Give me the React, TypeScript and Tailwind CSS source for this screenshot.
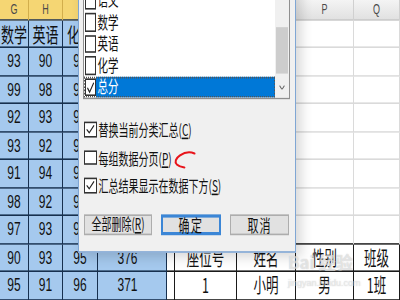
import type { ReactNode } from 'react'

const CJK = "font-['Noto_Sans_CJK_SC','Noto_Sans',sans-serif]"
const NUM = "font-['Liberation_Sans',Arial,sans-serif]"

// column widths of the visible sheet part
const COL_W = ['w-[29px]', 'w-[34px]', 'w-[35px]', 'w-[69px]', 'w-[8px]', 'w-[62px]', 'w-[59px]', 'w-[58px]', 'w-[46px]']
const HEAD = ['G', 'H', 'I', 'J', 'M', 'N', 'O', 'P', 'Q']

const SCORES = [
  [93, 90, 95, 375],
  [99, 98, 94, 383],
  [92, 93, 96, 372],
  [93, 92, 93, 374],
  [91, 94, 95, 371],
  [98, 92, 97, 380],
  [97, 93, 96, 379],
  [90, 93, 95, 376],
  [95, 91, 96, 371],
]

const RIGHT_TABLE: Record<number, string[]> = {
  7: ['', '座位号', '姓名', '性别', '班级'],
  8: ['', '1', '小明', '男', '1班'],
}

function Cell({ col, className, children }: { col: number; className: string; children?: ReactNode }) {
  return (
    <div className={`${COL_W[col]} shrink-0 h-full flex items-center justify-center leading-none ${className}`}>
      {children}
    </div>
  )
}

function Check({ checked, className }: { checked: boolean; className: string }) {
  return (
    <span className={`shrink-0 border border-[#333] bg-white flex ${className}`}>
      {checked && (
        <svg viewBox="0 0 10 10" preserveAspectRatio="none" className="w-full h-full">
          <path d="M1.6 5.2 L4 8 L8.6 1.8" fill="none" stroke="#222" strokeWidth="1.1" />
        </svg>
      )}
    </span>
  )
}

function Key({ text, k }: { text: string; k: string }) {
  return (
    <span>
      {text}(<span className="underline">{k}</span>)
    </span>
  )
}

function Sheet() {
  return (
    <div className="flex flex-col">
      {/* column headers */}
      <div className="flex h-[13px]">
        {HEAD.map((h, i) =>
          i < 4 ? (
            <Cell key={h} col={i} className={`bg-[#f5d673] border-r border-r-[#d2ae4c] border-b border-b-[#2c3e55] text-[9px] text-[#4a4a4a] ${NUM}`}>
              {h}
            </Cell>
          ) : (
            <Cell key={h} col={i} className={`bg-linear-to-b from-[#f4f4f4] to-[#e1e1e1] border-r border-r-[#d0d0d0] border-b border-b-[#c2c2c2] text-[9px] text-[#4a4a4a] ${NUM}`}>
              {h}
            </Cell>
          ),
        )}
      </div>

      {/* subject names */}
      <div className="flex h-[17px]">
        {['数学', '英语', '化学', '总分'].map((s, i) => (
          <Cell key={s} col={i} className={`bg-[#a5c9ee] border-r border-b border-[#17304f] text-[13px] text-[#111] ${CJK}`}>
            {s}
          </Cell>
        ))}
        {[4, 5, 6, 7, 8].map(i => (
          <Cell key={i} col={i} className="bg-white border-r border-b border-[#dadada]" />
        ))}
      </div>

      {/* score rows */}
      {SCORES.map((row, r) => {
        const table = RIGHT_TABLE[r]
        return (
          <div key={r} className="flex h-[17.5px]">
            {row.map((v, i) => (
              <Cell
                key={i}
                col={i}
                className={`bg-[#a5c9ee] border-r border-b border-[#17304f] text-[12px] text-[#111] ${NUM} ${i === 3 ? 'pr-[9px]' : ''}`}
              >
                {v}
              </Cell>
            ))}
            {[4, 5, 6, 7, 8].map(i =>
              table ? (
                <Cell key={i} col={i} className={`bg-white border-r border-b border-[#1a1a1a] text-[12.5px] text-[#111] ${CJK}`}>
                  {table[i - 4]}
                </Cell>
              ) : (
                <Cell
                  key={i}
                  col={i}
                  className={`bg-white border-r border-r-[#dadada] border-b ${r === 6 ? 'border-b-[#1a1a1a]' : 'border-b-[#dadada]'}`}
                />
              ),
            )}
          </div>
        )
      })}
    </div>
  )
}

function SubtotalDialog() {
  const fields = [
    { label: '语文', checked: false },
    { label: '数学', checked: false },
    { label: '英语', checked: false },
    { label: '化学', checked: false },
    { label: '总分', checked: true, selected: true },
  ]

  return (
    <div className={`absolute top-[-20px] left-[78px] w-[218px] h-[177.5px] bg-[#f0f0f0] border border-[#7fa6d4] shadow-[5px_3px_9px_rgba(0,0,0,0.16)] flex flex-col pl-[4px] pr-[5px] pt-[10px] ${CJK} text-[#111]`}>
      {/* field list */}
      <div className="h-[71.25px] border border-[#8f8f8f] bg-white flex">
        <div className="flex-1 flex flex-col justify-end overflow-hidden">
          {fields.map(f => (
            <div
              key={f.label}
              className={`h-[13.5px] shrink-0 flex items-center pl-[1px] ${f.selected ? 'outline outline-1 outline-dotted outline-[#555] -outline-offset-1' : ''}`}
            >
              <Check checked={f.checked} className="w-[11px] h-[11.5px]" />
              <span
                className={`h-full flex-1 flex items-center pl-[1.5px] text-[10.5px] leading-none ${f.selected ? 'bg-[#0078d7] text-white' : ''}`}
              >
                {f.label}
              </span>
            </div>
          ))}
        </div>
        <div className="w-[14px] bg-[#f0f0f0] flex flex-col items-center">
          <div className="h-[24.6px]" />
          <div className="w-[12px] h-[29.4px] bg-[#cdcdcd]" />
          <div className="flex-1" />
          <svg viewBox="0 0 8 6" preserveAspectRatio="none" className="w-[6px] h-[3.5px] mb-[5px]">
            <path d="M0.8 0.8 L4 5 L7.2 0.8" fill="none" stroke="#606060" strokeWidth="1.2" />
          </svg>
        </div>
      </div>

      {/* options */}
      <div className="mt-[10px] flex flex-col">
        {[
          { text: '替换当前分类汇总', k: 'C', checked: true },
          { text: '每组数据分页', k: 'P', checked: false },
          { text: '汇总结果显示在数据下方', k: 'S', checked: true },
        ].map(o => (
          <div key={o.k} className="h-[17.5px] flex items-center gap-[2px] pl-[1px] text-[10px] leading-none">
            <Check checked={o.checked} className="w-[12.5px] h-[9.5px]" />
            <Key text={o.text} k={o.k} />
          </div>
        ))}
      </div>

      {/* buttons */}
      <div className="mt-[9.25px] flex gap-[9px] pl-[1px] text-[10px] leading-none">
        <button type="button" className="w-[68px] h-[12.6px] bg-[#e1e1e1] border border-[#adadad] flex items-center justify-center">
          <Key text="全部删除" k="R" />
        </button>
        <button type="button" className="w-[60px] h-[12.6px] bg-[#e1e1e1] border-2 border-[#3b86d6] flex items-center justify-center tracking-[1.5px] text-[11px]">
          确定
        </button>
        <button type="button" className="w-[59px] h-[12.6px] bg-[#e1e1e1] border border-[#adadad] flex items-center justify-center tracking-[1px] text-[11px]">
          取消
        </button>
      </div>
    </div>
  )
}

export default function App() {
  return (
    <div className="relative w-[400px] h-[300px] overflow-hidden bg-white">
      {/* the capture is squashed horizontally, so draw at 400x187.5 and stretch */}
      <div className="relative w-[400px] h-[187.5px] origin-top-left scale-y-[1.6]">
        <Sheet />
        <SubtotalDialog />
      </div>

      {/* red hand-drawn arrow */}
      <svg className="absolute left-[170px] top-[146px] w-[30px] h-[26px]" viewBox="0 0 30 26">
        <path
          d="M24.5 7.5 C20 5.6 14.5 6.4 10 9.4 C5.6 12.4 4.4 16 6.8 18.4 C8.6 20 11.4 21 14.4 21.6"
          fill="none"
          stroke="#e8141b"
          strokeWidth="2"
          strokeLinecap="round"
        />
      </svg>

      {/* watermark */}
      <div className="absolute left-[288px] top-[253px] flex flex-col text-white/55 [text-shadow:0_0_1px_rgba(120,120,120,0.5)]">
        <span className={`text-[17px] font-bold leading-none ${CJK}`}>Bai 经验</span>
        <span className={`mt-[9px] text-[9px] leading-none ${NUM}`}>jingyan.baidu.com</span>
      </div>
    </div>
  )
}
